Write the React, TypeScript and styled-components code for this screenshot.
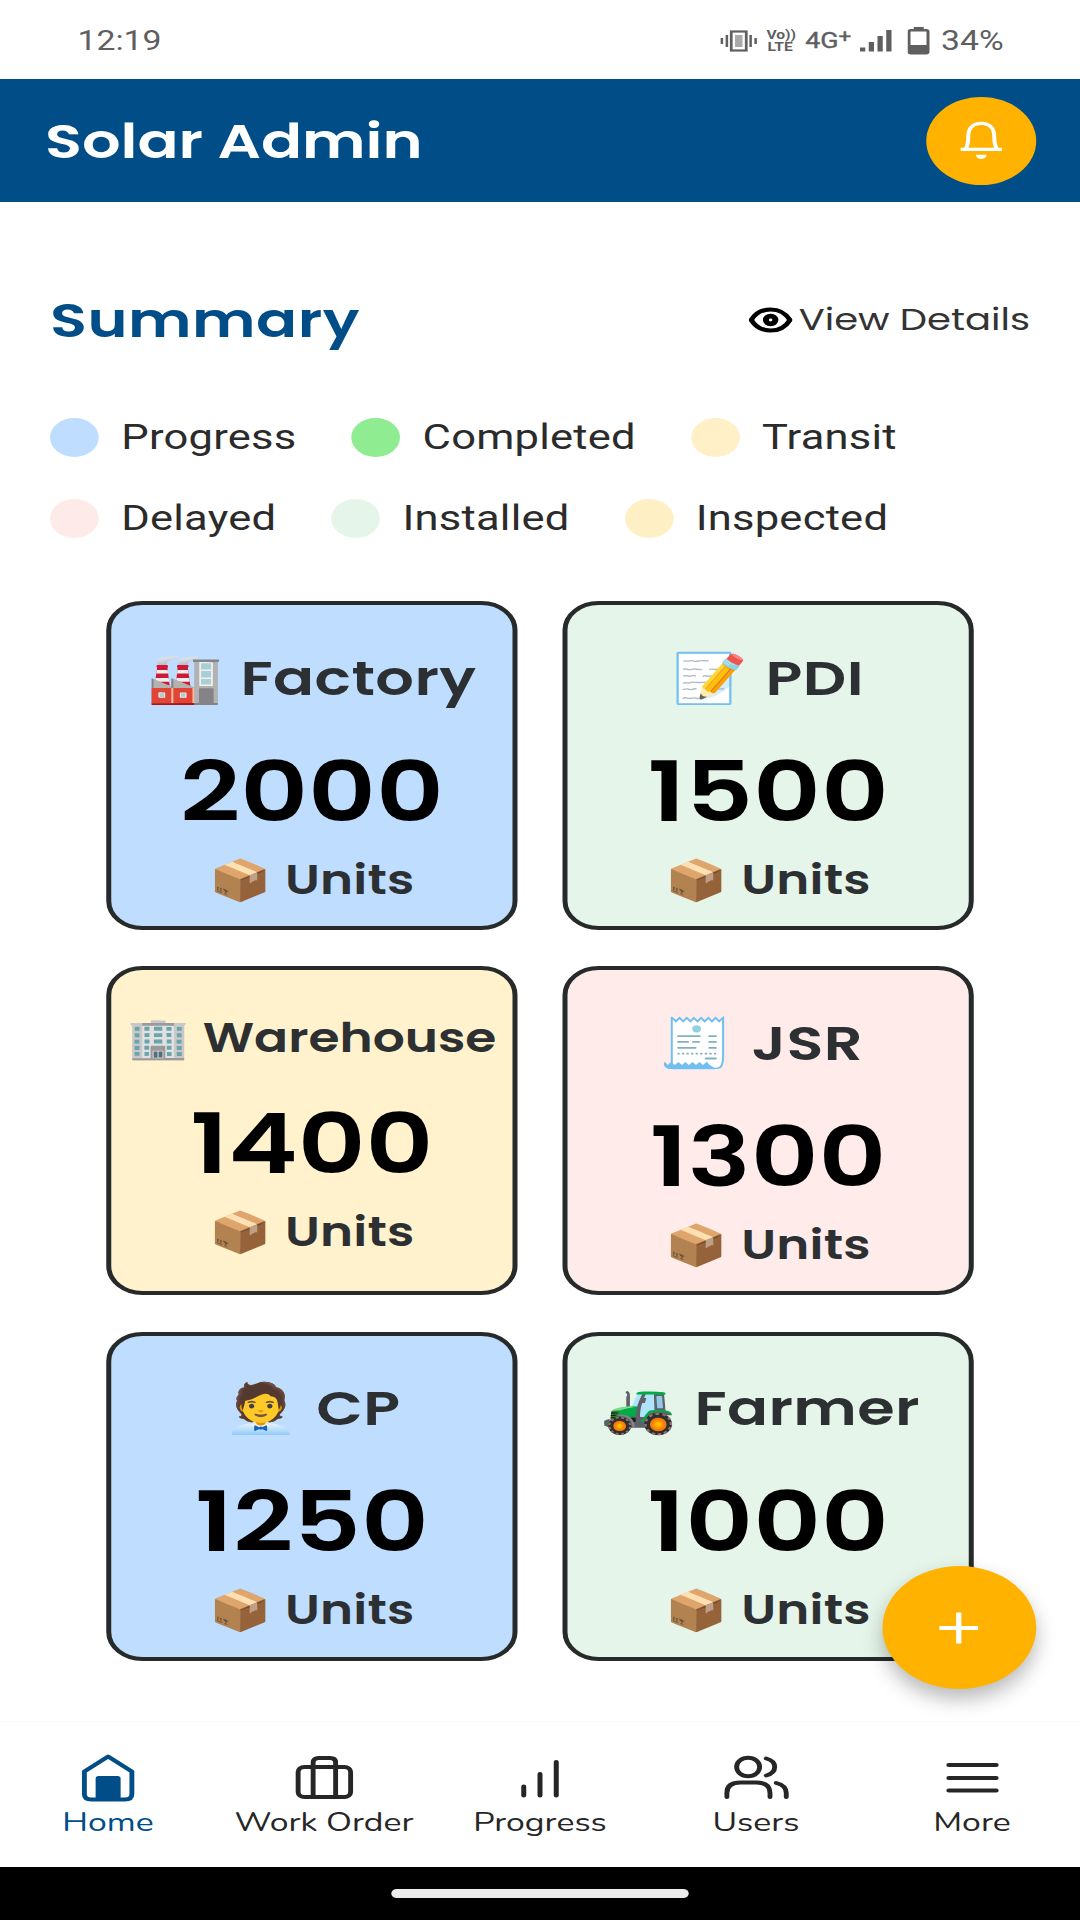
import React from "react";
import styled, { createGlobalStyle } from "styled-components";

const poppins = `Poppins, Inter, "Noto Color Emoji", sans-serif`;
const roboto = `Roboto, "Liberation Sans", sans-serif`;
const navFont = `Nunito, Lato, sans-serif`;

const GlobalStyle = createGlobalStyle`
  * { box-sizing: border-box; }
  body { margin: 0; width: 1080px; height: 1920px; overflow: hidden; background: #fff; }
  button { border: 0; padding: 0; background: none; font: inherit; color: inherit; }
`;

/* The phone's 864-unit wide canvas is widened to fill the window. */
const Screen = styled.div`
  position: relative;
  display: flex;
  flex-direction: column;
  width: 864px;
  height: 1920px;
  background: #fff;
  transform: scaleX(1.25);
  transform-origin: 0 0;
`;

const StatusBar = styled.div`
  display: flex;
  align-items: center;
  justify-content: space-between;
  height: 79px;
  padding: 3px 61px 0 62px;
  color: #5f5f5f;
  font: 400 27px/32px ${roboto};
`;

const StatusIcons = styled.div`
  display: flex;
  align-items: center;
`;

const Volte = styled.div`
  margin-left: 7px;
  width: 22px;
  text-align: center;
  font: 700 12.5px/12px ${roboto};
`;

const Network = styled.span`
  display: flex;
  margin-left: 9px;
  font: 400 21.5px/24px ${roboto};
  -webkit-text-stroke: 0.4px #5f5f5f;
`;

const NetworkPlus = styled.span`
  width: 9px;
  margin-top: -4px;
  font-size: 18px;
`;

const Percent = styled.span`
  margin-left: 9px;
`;

const Header = styled.header`
  display: flex;
  align-items: center;
  justify-content: space-between;
  height: 123px;
  padding: 0 35px 0 36px;
  background: #004d87;
  color: #fff;
`;

const Title = styled.h1`
  margin: 1px 0 0;
  font: 600 48.5px/72px ${poppins};
`;

const BellButton = styled.button`
  display: flex;
  align-items: center;
  justify-content: center;
  width: 88px;
  height: 88px;
  border-radius: 50%;
  background: #ffb300;
`;

const Main = styled.main`
  display: flex;
  flex-direction: column;
  flex: 1;
  padding: 82px 40px 0;
`;

const SummaryRow = styled.div`
  display: flex;
  align-items: center;
  justify-content: space-between;
  height: 72px;
`;

const SummaryTitle = styled.h2`
  margin: 0;
  color: #004d87;
  font: 600 48.5px/72px ${poppins};
  letter-spacing: 0.4px;
`;

const ViewDetails = styled.button`
  display: flex;
  align-items: center;
  gap: 5px;
  color: #333;
  font: 400 30.8px/48px ${poppins};
`;

const Legend = styled.div`
  display: flex;
  flex-direction: column;
  gap: 41px;
  margin-top: 61px;
`;

const LegendRow = styled.div`
  display: flex;
  gap: 44px;
`;

const LegendItem = styled.div`
  display: flex;
  align-items: center;
  gap: 18px;
  height: 40px;
  color: #2b2b2b;
  font: 400 34.8px/40px ${roboto};
  letter-spacing: 0.18px;
`;

const Dot = styled.span<{ $color: string }>`
  width: 39px;
  height: 39px;
  border-radius: 50%;
  background: ${(p) => p.$color};
`;

const Grid = styled.div`
  display: grid;
  grid-template-columns: repeat(2, 329px);
  grid-auto-rows: 329px;
  gap: 36.3px 36px;
  justify-content: center;
  margin-top: 63px;
`;

const Card = styled.article<{ $color: string }>`
  display: flex;
  flex-direction: column;
  align-items: center;
  padding-top: 36.5px;
  border: 4px solid #272a2a;
  border-radius: 29px;
  background: ${(p) => p.$color};
  white-space: nowrap;
`;

const CardTitle = styled.h3<{ $compact?: boolean; $trailing?: number }>`
  margin: 0;
  height: ${(p) => (p.$compact ? 59 : 72)}px;
  padding-right: ${(p) => p.$trailing ?? 0}px;
  color: #2d3032;
  font: 600 ${(p) => (p.$compact ? 40.2 : 48.5)}px/${(p) => (p.$compact ? 63 : 72)}px ${poppins};
  letter-spacing: ${(p) => (p.$compact ? 0 : 0.3)}px;
  word-spacing: ${(p) => (p.$compact ? 0.5 : 2)}px;
`;

const Count = styled.div`
  height: 110px;
  margin-top: 23px;
  color: #000;
  font: 600 84px/110px ${poppins};
`;

const Units = styled.div`
  height: 57px;
  margin-top: 5px;
  color: #2d3032;
  font: 600 40px/57px ${poppins};
  letter-spacing: 0.15px;
  word-spacing: 1px;
`;

const Fab = styled.button`
  position: absolute;
  right: 35.5px;
  bottom: 231px;
  display: flex;
  align-items: center;
  justify-content: center;
  width: 123px;
  height: 123px;
  border-radius: 50%;
  background: #ffb300;
  box-shadow: 0 10px 18px rgba(0, 0, 0, 0.28);
`;

const Nav = styled.nav`
  display: grid;
  grid-template-columns: repeat(5, 1fr);
  height: 146px;
  border-top: 1px solid #fafafa;
  background: #fff;
`;

const NavItem = styled.button<{ $active?: boolean }>`
  display: flex;
  flex-direction: column;
  align-items: center;
  padding-top: 30px;
  color: ${(p) => (p.$active ? "#004d87" : "#262626")};
  font: 400 27px/34px ${navFont};
  white-space: nowrap;

  svg {
    margin-bottom: 4px;
  }
`;

const GestureBar = styled.div`
  display: flex;
  justify-content: center;
  height: 53px;
  padding-top: 22px;
  background: #000;
`;

const GesturePill = styled.div`
  width: 238px;
  height: 9px;
  border-radius: 5px;
  background: #ececec;
`;

const VibrateIcon = () => (
  <svg width="30" height="24" viewBox="0 0 30 24" fill="none" stroke="#5f5f5f">
    <rect x="9" y="2.5" width="12" height="19" strokeWidth="2.2" />
    <rect x="12" y="6" width="6" height="12" fill="#aaa" stroke="none" />
    <path d="M5.5 6v12M24.5 6v12M1.5 9v6M28.5 9v6" strokeWidth="2" />
  </svg>
);

const SignalIcon = () => (
  <svg width="26" height="24" viewBox="0 0 26 24" fill="#5f5f5f" style={{ marginLeft: 8 }}>
    <rect x="0" y="18.5" width="4.2" height="4" />
    <rect x="7" y="13" width="4.2" height="9.5" />
    <rect x="14" y="7" width="4.2" height="15.5" />
    <rect x="21" y="1" width="4.2" height="21.5" />
  </svg>
);

const BatteryIcon = () => (
  <svg width="18" height="30" viewBox="0 0 18 30" style={{ marginLeft: 12 }}>
    <path d="M5 1h8v3H5z" fill="#5f5f5f" />
    <rect x="1.2" y="4.2" width="15.2" height="23" rx="1.5" fill="none" stroke="#5f5f5f" strokeWidth="2.4" />
    <path d="M1 19h16v8H1z" fill="#5f5f5f" />
  </svg>
);

const BellIcon = () => (
  <svg width="36" height="42" viewBox="0 0 36 42" fill="none" stroke="#fff" strokeWidth="3.2" strokeLinejoin="round">
    <path d="M5.500 29.200C7 26 7.600 22 7.600 16.500 7.600 8 11.500 3.400 18 3.400S28.400 8 28.400 16.500c0 5.500.6 9.500 2.100 12.700" />
    <path d="M1.500 29.400h33" />
    <path d="M14.500 35.500c1.300 3.600 5.700 3.600 7 0z" fill="#fff" strokeWidth="1.5" />
  </svg>
);

const EyeIcon = () => (
  <svg width="35" height="26" viewBox="0 0 35 26" fill="none" stroke="#000">
    <path d="M2 13C5.500 6 11 2.400 17.500 2.400S29.500 6 33 13c-3.500 7-9 10.600-15.500 10.600S5.500 20 2 13z" strokeWidth="4" strokeLinejoin="round" />
    <circle cx="17.5" cy="13" r="3.8" strokeWidth="4.8" />
  </svg>
);

const PlusIcon = () => (
  <svg width="32" height="32" viewBox="0 0 32 32" stroke="#fff" strokeWidth="4.2">
    <path d="M16 .5v31M.5 16h31" />
  </svg>
);

type IconProps = { children: React.ReactNode; stroke?: number };
const NavIcon = ({ children, stroke = 3.9 }: IconProps) => (
  <svg width="56" height="50" viewBox="0 0 56 50" fill="none" stroke="currentColor" strokeWidth={stroke} strokeLinecap="round" strokeLinejoin="round">
    {children}
  </svg>
);

const HomeIcon = () => (
  <NavIcon>
    <path d="M9.500 19.500 28.500 4.500l19 15V42q0 5.500-5.500 5.500H15q-5.500 0-5.500-5.500z" />
    <path d="M18.500 47V26.500q0-2.500 2.500-2.500h15q2.500 0 2.500 2.500V47z" fill="currentColor" stroke="none" />
  </NavIcon>
);

const BriefcaseIcon = () => (
  <NavIcon>
    <rect x="7.5" y="15" width="42" height="30" rx="5" />
    <path d="M19.500 45V10.500Q19.500 6 24 6h9q4.500 0 4.500 4.500V45" />
  </NavIcon>
);

const BarsIcon = () => (
  <NavIcon stroke={4}>
    <path d="M15 34.500v9M28 22v21.500M41 10v33.500" />
  </NavIcon>
);

const UsersIcon = () => (
  <NavIcon>
    <circle cx="21.5" cy="15" r="9.2" />
    <path d="M4.500 45v-4q0-10.500 11-10.500h12.500q11 0 11 10.500v4M36 6.500c9 3 9 14 0 17M44 31q8 2.500 8 10v4" />
  </NavIcon>
);

const MenuIcon = () => (
  <NavIcon>
    <path d="M9 13h38M9 26h38M9 38.500h38" />
  </NavIcon>
);

const legend = [
  [
    { label: "Progress", color: "#bfdeff" },
    { label: "Completed", color: "#90ec91" },
    { label: "Transit", color: "#fff0c8" },
  ],
  [
    { label: "Delayed", color: "#ffeaea" },
    { label: "Installed", color: "#e6f5e9" },
    { label: "Inspected", color: "#ffefc4" },
  ],
];

const cards = [
  { icon: "🏭", name: "Factory", count: 2000, color: "#bfdeff" },
  { icon: "📝", name: "PDI", count: 1500, color: "#e6f5e9" },
  { icon: "🏢", name: "Warehouse", count: 1400, color: "#fff2cc", compact: true },
  { icon: "🧾", name: "JSR", count: 1300, color: "#ffecea", trailing: 12 },
  { icon: "🧑‍💼", name: "CP", count: 1250, color: "#bfdeff" },
  { icon: "🚜", name: "Farmer", count: 1000, color: "#e6f5e9", trailing: 12 },
];

const tabs = [
  { label: "Home", Icon: HomeIcon },
  { label: "Work Order", Icon: BriefcaseIcon },
  { label: "Progress", Icon: BarsIcon },
  { label: "Users", Icon: UsersIcon },
  { label: "More", Icon: MenuIcon },
];

export default function App() {
  return (
    <Screen>
      <GlobalStyle />
      <StatusBar>
        <span>12:19</span>
        <StatusIcons>
          <VibrateIcon />
          <Volte>
            <div>Vo))</div>
            <div>LTE</div>
          </Volte>
          <Network>
            4G<NetworkPlus>+</NetworkPlus>
          </Network>
          <SignalIcon />
          <BatteryIcon />
          <Percent>34%</Percent>
        </StatusIcons>
      </StatusBar>
      <Header>
        <Title>Solar Admin</Title>
        <BellButton aria-label="Notifications">
          <BellIcon />
        </BellButton>
      </Header>
      <Main>
        <SummaryRow>
          <SummaryTitle>Summary</SummaryTitle>
          <ViewDetails>
            <EyeIcon />
            View Details
          </ViewDetails>
        </SummaryRow>
        <Legend>
          {legend.map((row, i) => (
            <LegendRow key={i}>
              {row.map((item) => (
                <LegendItem key={item.label}>
                  <Dot $color={item.color} />
                  {item.label}
                </LegendItem>
              ))}
            </LegendRow>
          ))}
        </Legend>
        <Grid>
          {cards.map((card) => (
            <Card key={card.name} $color={card.color}>
              <CardTitle $compact={card.compact} $trailing={card.trailing}>
                {card.icon} {card.name}
              </CardTitle>
              <Count>{card.count}</Count>
              <Units>📦 Units</Units>
            </Card>
          ))}
        </Grid>
      </Main>
      <Fab aria-label="Add">
        <PlusIcon />
      </Fab>
      <Nav>
        {tabs.map(({ label, Icon }, i) => (
          <NavItem key={label} $active={i === 0}>
            <Icon />
            {label}
          </NavItem>
        ))}
      </Nav>
      <GestureBar>
        <GesturePill />
      </GestureBar>
    </Screen>
  );
}
